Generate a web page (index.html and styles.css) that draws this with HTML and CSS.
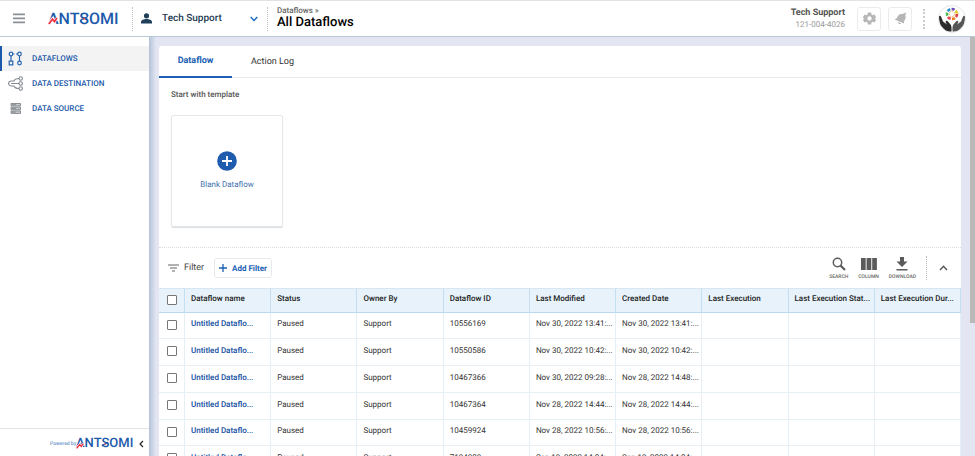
FILE: index.html
```html
<!DOCTYPE html>
<html lang="en">
<head>
<meta charset="utf-8">
<title>All Dataflows</title>
<link rel="stylesheet" href="styles.css">
</head>
<body>
<header class="topbar">
  <button class="menu" aria-label="Menu"><svg width="12" height="11" viewBox="0 0 12 11"><path d="M0 1.3h12M0 5.3h12M0 9.3h12" stroke="#8b9095" stroke-width="1.8"/></svg></button>
  <a class="logo" href="#">ANTSOMI<svg class="logo-mark" viewBox="0 0 72 17"><path d="M.5 14L4.500 9 6.500 11.500 9.500 8" fill="none" stroke="#fff" stroke-width="3"/><path d="M.8 14L4.500 9.200 6.500 11.500 9 8" fill="none" stroke="#ee3344" stroke-width="1.800"/><path d="M39.600 6q-.5 1.800-3.600 2.500t-3.700 2.800" fill="none" stroke="#1c59aa" stroke-width="1.500"/><circle cx="36" cy="8.500" r="1" fill="#ee3344"/></svg></a>
  <button class="account">
    <svg width="11" height="11" viewBox="0 0 11 11" fill="#1f3f5b"><circle cx="5.500" cy="2.800" r="2.600"/><path d="M0 10.500V9c0-2 3-3 5.500-3S11 7 11 9v1.500z"/></svg>
    <span>Tech Support</span>
    <svg width="8" height="6" viewBox="0 0 8 6"><path d="M.7 1L4 4.500 7.300 1" fill="none" stroke="#1c6ac0" stroke-width="1.400"/></svg>
  </button>
  <div class="heading"><a href="#">Dataflows »</a><h1>All Dataflows</h1></div>
  <div class="user"><strong>Tech Support</strong><span>121-004-4026</span></div>
  <button class="square" aria-label="Settings"><svg width="13" height="13" viewBox="0 0 24 24"><path fill="#b6b6b6" fill-rule="evenodd" d="M9 1h6l.7 3.600 2 1.200L21.200 4.500l3 5.300L21.500 12l2.700 2.300-3 5.200-3.500-1.300-2 1.200L15 23H9l-.7-3.600-2-1.200-3.500 1.300-3-5.200L2.500 12-.2 9.800l3-5.300 3.500 1.300 2-1.200zM12 8a4 4 0 1 0 0 8 4 4 0 0 0 0-8z"/></svg></button>
  <button class="square" aria-label="Notifications"><svg width="13" height="13" viewBox="0 0 13 13" fill="#b6b6b6"><path d="M.5 7.500C4 6.500 3 3.500 6 2.300c2-.8 3-.3 4-.8L11.500.5l.8.8-1 1.500c.5 2 .7 3.500-.5 5.200-.8 1.200-1 2-.7 3.500z"/><path d="M4 10l3 1.200c-.7 1.600-3 1-3-1.200z"/></svg></button>
  <span class="dots"></span>
  <button class="avatar" aria-label="Profile"><svg viewBox="0 0 28 28" width="28" height="28"><circle cx="14" cy="14" r="13.500" fill="#fff" stroke="#e5e8ea"/>
    <g fill="none" stroke-width="2.600"><circle cx="14" cy="9" r="2.800" stroke="#f2a93c" stroke-width="1" stroke-dasharray="1.500 1"/><circle cx="14" cy="9" r="5" stroke="#e33d49" stroke-dasharray="3.200 28.216"/><circle cx="14" cy="9" r="5" stroke="#ef7c27" stroke-dasharray="3.200 28.216" stroke-dashoffset="-4.500"/><circle cx="14" cy="9" r="5" stroke="#e33d49" stroke-dasharray="3.200 28.216" stroke-dashoffset="-9"/><circle cx="14" cy="9" r="5" stroke="#53b85a" stroke-dasharray="3.200 28.216" stroke-dashoffset="-13.500"/><circle cx="14" cy="9" r="5" stroke="#2c92ce" stroke-dasharray="3.200 28.216" stroke-dashoffset="-18"/><circle cx="14" cy="9" r="5" stroke="#6d4cb5" stroke-dasharray="3.200 28.216" stroke-dashoffset="-22.500"/><circle cx="14" cy="9" r="5" stroke="#e4c92d" stroke-dasharray="3.200 28.216" stroke-dashoffset="-27"/></g>
    <path d="M1 11.500q1-1.500 2 0l2 5 4 3q-2-2.500-1-3.500 1-.6 2.200.8 3.300 3 3.300 5.700v4q-5 .5-8-3-4.500-3.500-4.500-12z" fill="#2b2b2b"/><path d="M27 11.500q-1-1.500-2 0l-2 5-4 3q2-2.500 1-3.500-1-.6-2.200.8-3.300 3-3.300 5.700v4q5 .5 8-3 4.500-3.500 4.500-12z" fill="#555"/></svg></button>
</header>
<div class="shell">
  <aside class="sidebar">
    <nav>
      <a class="nav-item active" href="#"><svg width="15" height="15" viewBox="0 0 15 15" fill="none" stroke="#2864ad" stroke-width="1.200"><circle cx="3" cy="3" r="1.800"/><circle cx="11.500" cy="3" r="1.800"/><circle cx="11.500" cy="12" r="1.800"/><path d="M1.200 10.200h3.600v3.600H1.200zM3 5v5M11.500 5v5M5 3h1.500M8 3h1.500"/></svg>DATAFLOWS</a>
      <a class="nav-item" href="#"><svg width="15" height="15" viewBox="0 0 15 15" fill="none" stroke="#858a90" stroke-width="1.100"><circle cx="12.700" cy="2.500" r="1.700"/><circle cx="12.700" cy="7.500" r="1.700"/><circle cx="12.700" cy="12.500" r="1.700"/><path d="M11 2.500q-4 0-5 2.500H3q-2.500.5-2.500 2.500T3 10h3q1 2.500 5 2.500M3 7.500h8"/></svg>DATA DESTINATION</a>
      <a class="nav-item" href="#"><svg width="15" height="15" viewBox="0 0 15 15"><path d="M3 2.500h9.500v2.500H3zM3 6.200h9.500v2.500H3zM3 9.900h9.500v2.500H3z" fill="#c4c8cc" stroke="#747a80" stroke-width=".8"/><path d="M4.500 3.700h1m1 0h1m-3 3.700h1m1 0h1m-3 3.700h1m1 0h1" stroke="#555"/></svg>DATA SOURCE</a>
    </nav>
    <footer class="powered">
      <span>Powered by</span><a class="logo small" href="#">ANTSOMI<svg class="logo-mark" viewBox="0 0 72 17"><path d="M.5 14L4.500 9 6.500 11.500 9.500 8" fill="none" stroke="#fff" stroke-width="3"/><path d="M.8 14L4.500 9.200 6.500 11.500 9 8" fill="none" stroke="#ee3344" stroke-width="1.800"/><path d="M39.600 6q-.5 1.800-3.600 2.500t-3.700 2.800" fill="none" stroke="#1c59aa" stroke-width="1.500"/><circle cx="36" cy="8.500" r="1" fill="#ee3344"/></svg></a>
      <button class="collapse" aria-label="Collapse sidebar"><svg width="5" height="8" viewBox="0 0 5 8"><path d="M4 1L1 4l3 3" fill="none" stroke="#222" stroke-width="1.200"/></svg></button>
    </footer>
  </aside>
  <main class="main">
    <section class="panel">
      <div class="tabs" role="tablist"><button class="tab selected" role="tab" aria-selected="true">Dataflow</button><button class="tab" role="tab" aria-selected="false">Action Log</button></div>
      <div class="templates">
        <h2>Start with template</h2>
        <button class="card"><svg width="20" height="20" viewBox="0 0 20 20"><circle cx="10" cy="10" r="9.800" fill="#1f5cae"/><path d="M10 5v10M5 10h10" stroke="#fff" stroke-width="1.800"/></svg><span>Blank Dataflow</span></button>
      </div>
      <div class="toolbar">
        <span class="filter"><svg width="11" height="8" viewBox="0 0 11 8"><path d="M0 1h11M2 4h7M4 7h3" stroke="#666" stroke-width="1.200"/></svg>Filter</span>
        <button class="add"><svg width="8" height="8" viewBox="0 0 8 8"><path d="M4 0v8M0 4h8" stroke="#1c5fb4" stroke-width="1.300"/></svg>Add Filter</button>
        <div class="tools">
          <button class="tool search"><svg width="14" height="14" viewBox="0 0 14 14"><circle cx="5.500" cy="5.500" r="4.200" fill="none" stroke="#5b5b5b" stroke-width="1.500"/><path d="M8.500 8.500l4.500 4.500" stroke="#5b5b5b" stroke-width="2.200"/></svg>SEARCH</button>
          <button class="tool column"><svg width="16" height="14" viewBox="0 0 16 14"><path d="M0 1h4.700v12H0zM5.600 1h4.700v12H5.600zM11.200 1h4.700v12h-4.700z" fill="#5b5b5b"/></svg>COLUMN</button>
          <button class="tool download"><svg width="12" height="14" viewBox="0 0 12 14"><path d="M4 0h4v4.500h3.500L6 10 .5 4.500H4zM.5 12h11v1.600H.5z" fill="#5b5b5b"/></svg>DOWNLOAD</button>
          <button class="fold" aria-label="Collapse"><svg width="9" height="6" viewBox="0 0 9 6"><path d="M1 5l3.500-3.700L8 5" fill="none" stroke="#555" stroke-width="1.400"/></svg></button>
        </div>
      </div>
      <table>
        <thead><tr><th class="check"><input type="checkbox" aria-label="Select all"></th><th>Dataflow name</th><th>Status</th><th>Owner By</th><th>Dataflow ID</th><th>Last Modified</th><th>Created Date</th><th>Last Execution</th><th>Last Execution Stat...</th><th>Last Execution Dur...</th></tr></thead>
        <tbody>
          <tr><td class="check"><input type="checkbox" aria-label="Select 10556169"></td><td><a href="#">Untitled Dataflo...</a></td><td>Paused</td><td>Support</td><td>10556169</td><td>Nov 30, 2022 13:41:...</td><td>Nov 30, 2022 13:41:...</td><td></td><td></td><td></td></tr>
          <tr><td class="check"><input type="checkbox" aria-label="Select 10550586"></td><td><a href="#">Untitled Dataflo...</a></td><td>Paused</td><td>Support</td><td>10550586</td><td>Nov 30, 2022 10:42:...</td><td>Nov 30, 2022 10:42:...</td><td></td><td></td><td></td></tr>
          <tr><td class="check"><input type="checkbox" aria-label="Select 10467366"></td><td><a href="#">Untitled Dataflo...</a></td><td>Paused</td><td>Support</td><td>10467366</td><td>Nov 30, 2022 09:28:...</td><td>Nov 28, 2022 14:48:...</td><td></td><td></td><td></td></tr>
          <tr><td class="check"><input type="checkbox" aria-label="Select 10467364"></td><td><a href="#">Untitled Dataflo...</a></td><td>Paused</td><td>Support</td><td>10467364</td><td>Nov 28, 2022 14:44:...</td><td>Nov 28, 2022 14:44:...</td><td></td><td></td><td></td></tr>
          <tr><td class="check"><input type="checkbox" aria-label="Select 10459924"></td><td><a href="#">Untitled Dataflo...</a></td><td>Paused</td><td>Support</td><td>10459924</td><td>Nov 28, 2022 10:56:...</td><td>Nov 28, 2022 10:56:...</td><td></td><td></td><td></td></tr>
          <tr><td class="check"><input type="checkbox" aria-label="Select 7194809"></td><td><a href="#">Untitled Dataflo...</a></td><td>Paused</td><td>Support</td><td>7194809</td><td>Sep 19, 2022 14:04:...</td><td>Sep 19, 2022 14:04:...</td><td></td><td></td><td></td></tr>
        </tbody>
      </table>
    </section>
    <div class="scroll"><span class="thumb"></span></div>
  </main>
</div>
</body>
</html>
```
FILE: styles.css
```css
* { box-sizing: border-box; }
body { margin: 0; height: 100vh; overflow: hidden; display: flex; flex-direction: column; font-family: Roboto, "Liberation Sans", sans-serif; font-size: 8px; color: #333; background: #fff; text-rendering: geometricPrecision; }
button { font: inherit; color: inherit; background: none; border: 0; padding: 0; text-rendering: inherit; }
a { color: inherit; text-decoration: none; }
h1, h2 { margin: 0; }
svg { display: block; flex: none; }

.topbar { display: flex; align-items: center; height: 37px; flex: none; border-top: 1px solid #e2e2e2; border-bottom: 1px solid #b9cad6; padding: 0 9px 0 13px; position: relative; z-index: 1; }
.menu { width: 35px; }
.logo { position: relative; width: 84px; font-weight: 500; font-size: 16px; line-height: 17px; color: #1c59aa; }
.logo-mark { position: absolute; left: 0; top: 0; width: 72px; height: 17px; }
.account { display: flex; align-items: center; height: 24px; width: 136px; padding: 0 9px 0 8px; border: dotted #c4c4c4; border-width: 0 1px; font-size: 10px; font-weight: 500; color: #243c52; }
.account span { flex: 1; text-align: left; padding-left: 10px; }
.heading { flex: 1; padding-left: 9px; }
.heading a { display: block; font-size: 8px; line-height: 9px; font-weight: 500; color: #666; }
h1 { font-size: 13px; line-height: 16px; font-weight: 500; color: #000; }
.user { display: flex; flex-direction: column; text-align: right; margin-right: 12px; color: #999; line-height: 12px; }
.user strong { font-size: 9px; font-weight: 700; color: #555; }
.square { width: 24px; height: 24px; border: 1px solid #e9ecef; border-radius: 3px; display: grid; place-items: center; margin-right: 7px; }
.dots { height: 20px; border-left: 2px dotted #ccc; margin: 0 13px 0 4px; }

.shell { flex: 1; min-height: 0; display: flex; }
.sidebar { width: 149px; flex: none; display: flex; flex-direction: column; padding-top: 9px; }
nav { flex: 1; }
.nav-item { display: flex; align-items: center; gap: 9px; height: 25px; padding-left: 6px; border-left: 2px solid transparent; font-weight: 500; color: #1c59aa; }
.active { background: #f3f3f3; border-color: #1c59aa; }
.powered { display: flex; align-items: center; justify-content: flex-end; height: 28px; border-top: 1px solid #e4e4e4; padding: 3px 5px 0 0; color: #3c76b8; font-size: 5px; }
.small { width: 58px; font-size: 13px; line-height: 14px; }
.small .logo-mark { width: 58px; height: 14px; }
.collapse { margin-left: 5px; }

.main { flex: 1; min-width: 0; display: flex; padding: 9px 0 0 10px; background: linear-gradient(90deg, #b3c3d6, #e3e5f2 7px); }
.panel { flex: 1; min-width: 0; background: #fff; border-radius: 3px 3px 0 0; }
.tabs { display: flex; height: 32px; border-bottom: 1px solid #e9e9e9; font-size: 9px; }
.tab { width: 73px; height: 32px; margin-right: 4px; }
.selected { color: #1c5fb4; font-weight: 700; border-bottom: 2px solid #1c5fb4; }
.templates { padding: 12px; height: 170px; border-bottom: 1px dotted #ddd; }
h2 { font-size: 8px; line-height: 10px; font-weight: 500; color: #555; }
.card { display: flex; flex-direction: column; align-items: center; justify-content: center; gap: 9px; width: 112px; height: 112px; margin-top: 15px; padding-bottom: 2px; border: 1px solid #e5e8ea; border-radius: 2px; box-shadow: 0 1px 1px #d9dde0; color: #426fae; }
.toolbar { display: flex; align-items: center; height: 40px; padding: 0 13px 0 9px; }
.filter { display: flex; align-items: center; gap: 5px; width: 46px; font-size: 9px; color: #444; }
.add { display: flex; align-items: center; justify-content: center; gap: 5px; width: 58px; height: 20px; border: 1px solid #e7eaec; border-radius: 3px; color: #1c5fb4; font-weight: 700; }
.tools { display: flex; align-items: center; margin-left: auto; }
.tool { display: flex; flex-direction: column; align-items: center; gap: 3px; font-size: 5px; font-weight: 500; color: #666; margin-right: 10px; }
.fold { height: 24px; padding-left: 12px; border-left: 1px dotted #bbb; }

table { width: 100%; table-layout: fixed; border-collapse: separate; border-spacing: 0; }
th, td { padding: 0 6px 4px; text-align: left; white-space: nowrap; overflow: hidden; border-right: 1px solid #e5eff5; border-bottom: 1px solid #e7f0f5; }
th { height: 25px; background: #e7f2fb; border-color: #c4def2; border-top: 1px solid #d6e6f3; border-bottom-color: #b7d8f0; font-weight: 500; color: #222; }
td { height: 27px; }
tr:nth-child(4n+1) td { height: 26px; }
td a { color: #144f9f; font-weight: 500; }
.check { width: 26px; padding: 0 8px 2px; }
input { display: block; appearance: none; width: 10px; height: 10px; margin: 0; border: 1px solid #777; border-radius: 1px; background: #fff; }
.scroll { width: 14px; flex: none; display: flex; justify-content: flex-end; margin-top: -9px; }
.thumb { width: 5px; height: 286px; background: #b9b9b9; }
```
